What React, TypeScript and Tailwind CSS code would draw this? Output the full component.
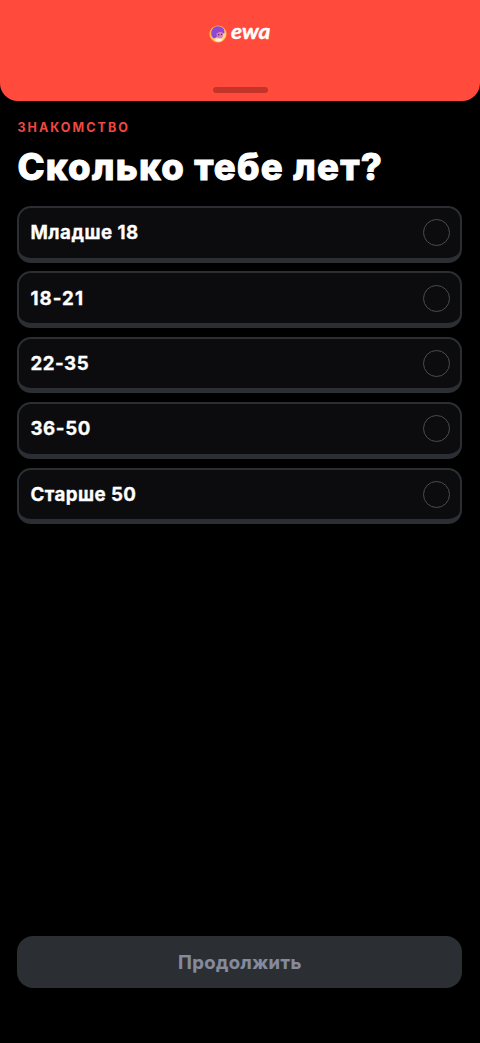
import { useState } from 'react'

const options = [
  { label: 'Младше 18', tracking: 'tracking-[0.5px]' },
  { label: '18-21', tracking: 'tracking-[1.05px]' },
  { label: '22-35', tracking: 'tracking-[0.5px]' },
  { label: '36-50', tracking: 'tracking-[0.6px]' },
  { label: 'Старше 50', tracking: 'tracking-[0.45px]' },
]

function Logo() {
  return (
    <svg width="66" height="32" viewBox="-2 -6 66 32" role="img" aria-label="ewa">
      <circle cx="9" cy="10" r="8.6" fill="#ffb64b" />
      <circle cx="9.4" cy="10.2" r="7.3" fill="#ffd789" />
      <path d="M2.8 12.5C.9 7.2 3.8 2.4 8.7 2.2c5.1-.1 7.8 3.7 6.5 7.6l-2.7-1.2-3.2.2-1.8 4.8-2.8.9z" fill="#9047d5" />
      <path d="M7.3 9.4l4.6-1.6 2.3 1.7-.5 3.6-2.4 1.8-3-1.1z" fill="#d97fb4" />
      <path d="M7.1 14.8l4.5-.2 1.8 1.5-2.2 1.3H7.6l-1.8-.8z" fill="#fff3e6" />
      <circle cx="9.6" cy="10.7" r=".8" fill="#4a246d" />
      <circle cx="12.5" cy="10.4" r=".7" fill="#4a246d" />
      <text
        x="22"
        y="15"
        textLength="39.5"
        lengthAdjust="spacingAndGlyphs"
        fill="white"
        stroke="white"
        strokeWidth=".4"
        strokeLinejoin="round"
        className="font-['Lato'] text-[20px] font-bold italic"
      >
        ewa
      </text>
    </svg>
  )
}

interface OptionProps {
  label: string
  tracking: string
  checked: boolean
  onSelect: () => void
}

function Option({ label, tracking, checked, onSelect }: OptionProps) {
  return (
    <button
      type="button"
      role="radio"
      aria-checked={checked}
      onClick={onSelect}
      className="flex h-[56.7px] w-full items-center justify-between rounded-[14px] border-2 border-b-[5px] border-[#2b2e32] bg-[#0c0c0e] pr-[10px] pl-[11px] text-left"
    >
      <span className={`pt-px text-[18.7px] leading-6 font-bold text-white [-webkit-text-stroke:0.3px_white] ${tracking}`}>
        {label}
      </span>
      <span
        className={`size-[27px] rounded-full border ${checked ? 'border-[#ff4a3c] bg-[#ff4a3c]' : 'border-[#4b4c52]'}`}
      />
    </button>
  )
}

export default function App() {
  const [selected, setSelected] = useState<string | null>(null)

  return (
    <div className="flex h-[1043px] w-[480px] flex-col bg-black font-['Inter','Liberation_Sans',sans-serif]">
      <header className="flex h-[101px] flex-col items-center justify-between rounded-b-[18px] bg-[#ff4a3c] pt-[18px] pb-[8px]">
        <Logo />
        <div className="h-[6px] w-[55px] rounded-full bg-[#c3342b]" />
      </header>

      <main className="flex flex-1 flex-col pt-[18px] pr-[17.6px] pl-[17.4px]">
        <p className="h-[18px] text-[12.5px] leading-[18px] font-bold tracking-[2.05px] text-[#f0483f]">ЗНАКОМСТВО</p>
        <h1 className="mt-[9px] h-[42px] text-[36.5px] leading-[42px] font-extrabold tracking-[1.25px] whitespace-nowrap text-white [-webkit-text-stroke:0.9px_white]">
          Сколько тебе лет?
        </h1>

        <div role="radiogroup" className="mt-[18px] flex flex-col gap-[8.7px]">
          {options.map(({ label, tracking }) => (
            <Option
              key={label}
              label={label}
              tracking={tracking}
              checked={selected === label}
              onSelect={() => setSelected(label)}
            />
          ))}
        </div>

        <button
          type="button"
          disabled={!selected}
          className="mt-auto mb-[55px] h-[52px] w-full rounded-[16px] bg-[#2b2e33] pt-[2px] text-[18.5px] font-bold tracking-[0.4px] text-[#858b9c] [-webkit-text-stroke:0.2px_#858b9c]"
        >
          Продолжить
        </button>
      </main>
    </div>
  )
}
